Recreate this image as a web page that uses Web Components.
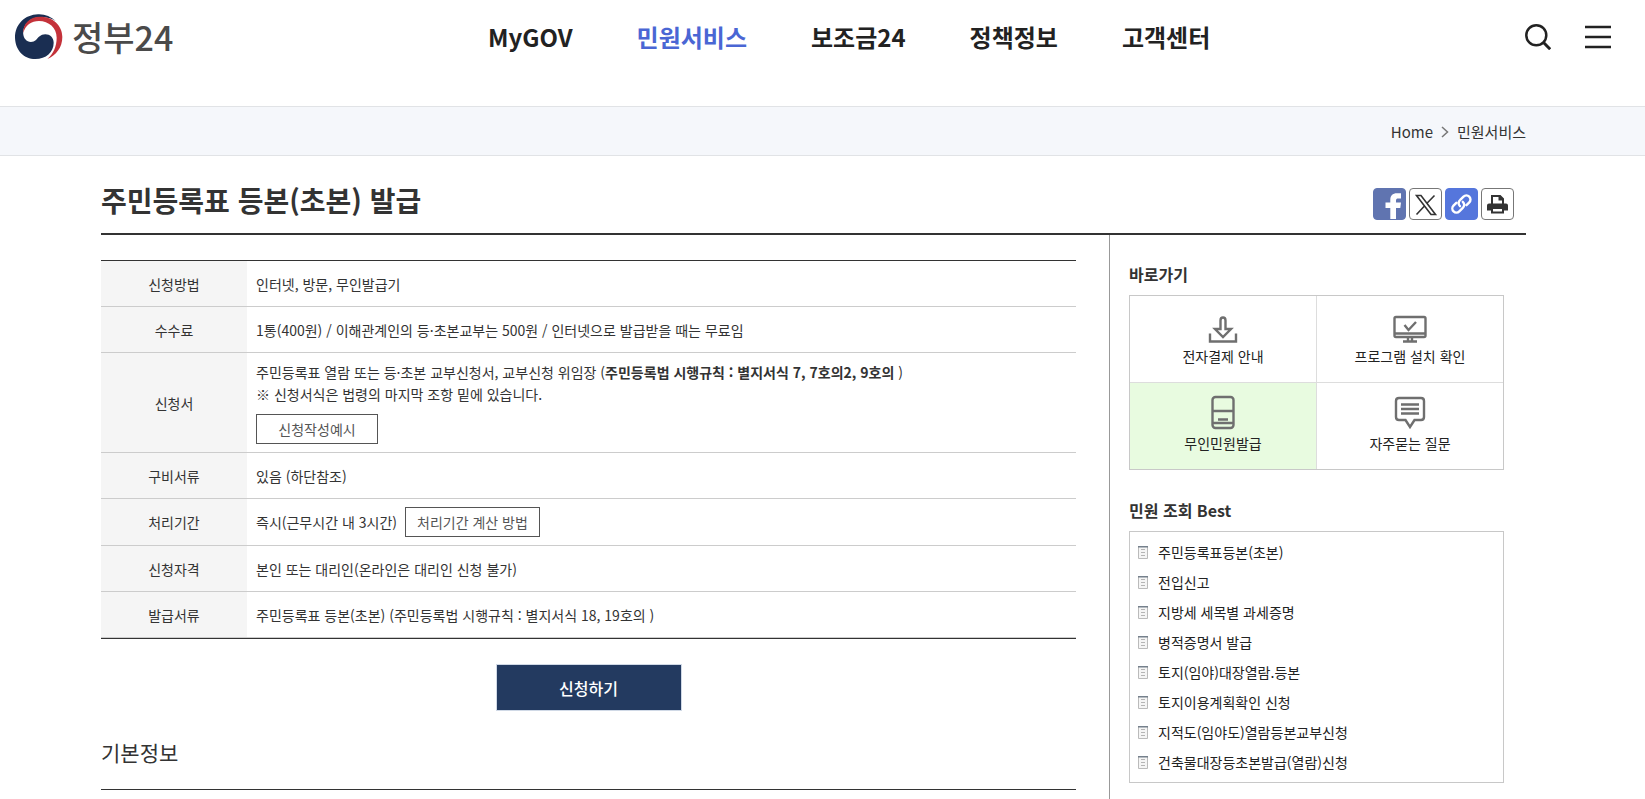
<!DOCTYPE html>
<html lang="ko">
<head>
<meta charset="utf-8">
<meta name="viewport" content="width=device-width, initial-scale=1">
<title>주민등록표 등본(초본) 발급 | 정부24</title>
<style>
  body {
    margin: 0;
    font-family: "Noto Sans CJK KR", sans-serif;
    font-size: 14px;
    line-height: 22px;
    color: #333;
    background: #fff;
  }
</style>
</head>
<body>
<gov-page>
  <gov-header slot="header"></gov-header>
  <gov-breadcrumb slot="header">
    <a slot="parent" href="#home">Home</a>
    <a href="#service">민원서비스</a>
  </gov-breadcrumb>

  <gov-title slot="title">
    주민등록표 등본(초본) 발급
    <gov-share slot="tools"></gov-share>
  </gov-title>

  <gov-info-table></gov-info-table>
  <gov-apply>신청하기</gov-apply>
  <gov-section-title>기본정보</gov-section-title>

  <gov-side-box slot="side" heading="바로가기">
    <gov-quick-links></gov-quick-links>
  </gov-side-box>
  <gov-side-box slot="side" heading="민원 조회 Best">
    <gov-best-list></gov-best-list>
  </gov-side-box>
</gov-page>

<script>
// shared helper: every component has an open root
function render(el, html) {
  el.attachShadow({ mode: "open" }).innerHTML = html;
}

class GovPage extends HTMLElement {
  constructor() {
    super();
    render(this, /* html */ `
      <style>
        :host {
          display: flex;
          flex-direction: column;
          min-height: 100vh;
        }
        .container {
          flex: 1;
          display: flex;
          flex-direction: column;
          padding: 0 119px 0 101px;
        }
        .columns {
          flex: 1;
          display: grid;
          grid-template-columns: minmax(0, 1fr) 417px;
          gap: 33px;
        }
        main { padding-top: 25px; }
        aside {
          box-sizing: border-box;
          display: flex;
          flex-direction: column;
          gap: 27px;
          border-left: 1px solid #999;
          padding: 26px 22px 0 19px;
        }
      </style>
      <slot name="header"></slot>
      <div class="container">
        <slot name="title"></slot>
        <div class="columns">
          <main><slot></slot></main>
          <aside><slot name="side"></slot></aside>
        </div>
      </div>
    `);
  }
}

class GovHeader extends HTMLElement {
  constructor() {
    super();
    render(this, /* html */ `
      <style>
        :host {
          display: flex;
          align-items: center;
          height: 74px;
          padding: 0 34px 32px 15px;
          border-bottom: 1px solid #e1e3e6;
        }
        a { color: inherit; text-decoration: none; }
        .logo {
          display: flex;
          align-items: center;
          gap: 9px;
          font-size: 34px;
          line-height: 46px;
          font-weight: 500;
          color: #4a4a4a;
        }
        nav {
          flex: 1;
          display: flex;
          justify-content: center;
          gap: 64px;
          font-size: 24px;
          line-height: 36px;
          font-weight: 700;
          color: #222;
        }
        nav a[aria-current] { color: #4a66d4; }
        .tools { display: flex; gap: 34px; }
        button {
          display: block;
          padding: 0;
          border: 0;
          background: none;
          cursor: pointer;
        }
        svg { display: block; }
      </style>
      <a class="logo" href="#main">
        <svg width="48" height="46" viewBox="45 41 144 138" aria-hidden="true">
          <path fill="#1a2e52" d="M168 63C152 48 134 41 114 42C75 43 45 72 45 112C46 150 72 176 106 176C138 176 161 155 161 127C161 112 150 102 136 102C121 102 115 112 108 119C99 127 84 127 76 117C69 108 69 96 70 92C73 68 94 52 119 51C140 50 156 54 168 63Z"/>
          <path fill="#c4323a" d="M70 98C68 70 90 49 119 49C157 48 187 74 187 110C187 142 168 165 142 176C160 160 170 138 170 112C170 82 146 62 117 62C94 62 76 74 70 98Z"/>
        </svg>
        <span>정부24</span>
      </a>
      <nav aria-label="주메뉴">
        <a href="#mygov">MyGOV</a>
        <a href="#service" aria-current="page">민원서비스</a>
        <a href="#subsidy">보조금24</a>
        <a href="#policy">정책정보</a>
        <a href="#help">고객센터</a>
      </nav>
      <div class="tools">
        <button type="button" aria-label="검색">
          <svg width="26" height="26" viewBox="0 0 26 26" fill="none" stroke="#222" stroke-width="2.5">
            <circle cx="11.3" cy="11.3" r="10"/><path d="M18.5 18.5L25.2 25.2" stroke-width="3"/>
          </svg>
        </button>
        <button type="button" aria-label="전체메뉴">
          <svg width="26" height="26" viewBox="0 0 26 26" stroke="#222" stroke-width="2.6">
            <path d="M0 3H26M0 13H26M0 23H26"/>
          </svg>
        </button>
      </div>
    `);
  }
}

class GovBreadcrumb extends HTMLElement {
  constructor() {
    super();
    render(this, /* html */ `
      <style>
        :host {
          display: block;
          padding: 13px 119px 11px;
          background: #f5f7fb;
          border-bottom: 1px solid #e1e3e6;
          font-size: 15px;
          line-height: 24px;
        }
        nav {
          display: flex;
          justify-content: flex-end;
          align-items: center;
          gap: 8px;
        }
        ::slotted(a) { color: #333; text-decoration: none; }
      </style>
      <nav aria-label="현재위치">
        <slot name="parent"></slot>
        <svg width="8" height="12" viewBox="0 0 8 12" aria-hidden="true">
          <path d="M1 1L6.500 6L1 11" fill="none" stroke="#777" stroke-width="1.500"/>
        </svg>
        <slot></slot>
      </nav>
    `);
  }
}

class GovTitle extends HTMLElement {
  constructor() {
    super();
    render(this, /* html */ `
      <style>
        :host {
          display: flex;
          align-items: flex-end;
          justify-content: space-between;
          padding: 24px 12px 13px 0;
          border-bottom: 2px solid #333;
        }
        h1 {
          margin: 0;
          font-size: 28px;
          line-height: 40px;
          font-weight: 700;
        }
      </style>
      <h1><slot></slot></h1>
      <slot name="tools"></slot>
    `);
  }
}

class GovShare extends HTMLElement {
  constructor() {
    super();
    render(this, /* html */ `
      <style>
        :host { display: flex; gap: 3px; }
        button {
          box-sizing: border-box;
          width: 33px;
          height: 32px;
          padding: 0;
          border: 1px solid #777;
          border-radius: 4px;
          background: #fff;
          overflow: hidden;
          cursor: pointer;
        }
        .fb { background: #6074b0; border-color: #6074b0; }
        .link { background: #5576dc; border-color: #5576dc; }
        svg { display: block; }
      </style>
      <button class="fb" type="button" aria-label="페이스북 공유">
        <svg width="31" height="30" viewBox="0 0 31 30"><path fill="#fff" d="M16.300 31V19H11.500V13.500H16.300V11C16.300 6.500 18.500 4.200 23 4.200H27V9.500H24.500C22.500 9.500 22 10 22 11.800V13.500H27L26.300 19H22V31Z"/></svg>
      </button>
      <button type="button" aria-label="X 공유">
        <svg width="31" height="30" viewBox="0 0 31 30" fill="none" stroke="#333"><path stroke-width="1.600" d="M6.500 6.500H11L25.500 25.500H21ZM24.500 6.500L17.200 14M14 17.500L6.500 25.500"/></svg>
      </button>
      <button class="link" type="button" aria-label="주소 복사">
        <svg width="31" height="30" viewBox="0 0 31 30" fill="none" stroke="#fff" stroke-width="2.400" stroke-linecap="round"><path d="M14 17.200A4 4 0 0 1 14 11.200L17.500 7.700A4 4 0 0 1 23.300 13.400L20.500 16.200M16.800 12.800A4 4 0 0 1 16.800 18.800L13.300 22.300A4 4 0 0 1 7.500 16.600L10.300 13.800"/></svg>
      </button>
      <button type="button" aria-label="인쇄">
        <svg width="31" height="30" viewBox="0 0 31 30"><path fill="#333" d="M7 14.500Q5 14.500 5 16.500V21.500H9V19.500H22V21.500H26V16.500Q26 14.500 24 14.500H22V9.500L18.500 6H9V14.500Z"/><path fill="#fff" d="M11 8H16.500V11.500H20V14.500H11Z"/><path fill="#fff" stroke="#333" stroke-width="2" d="M10 19H21V23.500H10Z"/></svg>
      </button>
    `);
  }
}

class GovInfoTable extends HTMLElement {
  constructor() {
    super();
    render(this, /* html */ `
      <style>
        :host { display: block; }
        table {
          width: 100%;
          border-collapse: separate;
          border-spacing: 0;
          border-top: 1px solid #333;
          border-bottom: 1px solid #333;
        }
        th, td {
          height: 29px;
          padding: 8px 9px;
          border-bottom: 1px solid #ccc;
          font-weight: 400;
        }
        th { width: 128px; background: #f5f5f5; text-align: center; }
        td { text-align: left; }
        p { margin: 0; }
        .line { display: flex; align-items: center; gap: 8px; }
        button {
          box-sizing: border-box;
          min-width: 122px;
          height: 30px;
          padding: 0 11px;
          border: 1px solid #555;
          background: #fff;
          color: #555;
          font: inherit;
          cursor: pointer;
        }
        p + button { display: block; margin-top: 9px; }
      </style>
      <table>
        <tbody>
          <tr><th scope="row">신청방법</th><td>인터넷, 방문, 무인발급기</td></tr>
          <tr><th scope="row">수수료</th><td>1통(400원) / 이해관계인의 등·초본교부는 500원 / 인터넷으로 발급받을 때는 무료임</td></tr>
          <tr>
            <th scope="row">신청서</th>
            <td>
              <p>주민등록표 열람 또는 등·초본 교부신청서, 교부신청 위임장 (<b>주민등록법 시행규칙 : 별지서식 7, 7호의2, 9호의</b> )</p>
              <p>※ 신청서식은 법령의 마지막 조항 밑에 있습니다.</p>
              <button type="button">신청작성예시</button>
            </td>
          </tr>
          <tr><th scope="row">구비서류</th><td>있음 (하단참조)</td></tr>
          <tr>
            <th scope="row">처리기간</th>
            <td><div class="line"><span>즉시(근무시간 내 3시간)</span><button type="button">처리기간 계산 방법</button></div></td>
          </tr>
          <tr><th scope="row">신청자격</th><td>본인 또는 대리인(온라인은 대리인 신청 불가)</td></tr>
          <tr><th scope="row">발급서류</th><td>주민등록표 등본(초본) (주민등록법 시행규칙 : 별지서식 18, 19호의 )</td></tr>
        </tbody>
      </table>
    `);
  }
}

class GovApply extends HTMLElement {
  constructor() {
    super();
    render(this, /* html */ `
      <style>
        :host { display: flex; justify-content: center; padding: 25px 0; }
        button {
          width: 186px;
          height: 47px;
          border: 1px solid #d0d9e6;
          background: #233a60;
          color: #fff;
          font: inherit;
          font-size: 16px;
          font-weight: 500;
          cursor: pointer;
        }
      </style>
      <button type="button"><slot></slot></button>
    `);
  }
}

class GovSectionTitle extends HTMLElement {
  constructor() {
    super();
    render(this, /* html */ `
      <style>
        :host { display: block; border-bottom: 1px solid #333; padding-bottom: 21px; }
        h2 { margin: 0; font-size: 21px; line-height: 32px; font-weight: 400; }
      </style>
      <h2><slot></slot></h2>
    `);
  }
}

class GovSideBox extends HTMLElement {
  constructor() {
    super();
    render(this, /* html */ `
      <style>
        :host { display: block; }
        h2 { margin: 0 0 8px; font-size: 16px; line-height: 26px; font-weight: 700; }
      </style>
      <h2></h2>
      <slot></slot>
    `);
  }

  connectedCallback() {
    this.shadowRoot.querySelector("h2").textContent = this.getAttribute("heading");
  }
}

class GovQuickLinks extends HTMLElement {
  constructor() {
    super();
    render(this, /* html */ `
      <style>
        :host {
          display: grid;
          grid-template-columns: 1fr 1fr;
          gap: 1px;
          border: 1px solid #c8c8c8;
          background: #ddd;
        }
        a {
          display: flex;
          flex-direction: column;
          align-items: center;
          box-sizing: border-box;
          height: 86px;
          padding-top: 11px;
          background: #fff;
          color: #222;
          text-decoration: none;
        }
        a.on { background: #e8fbe0; }
        svg { fill: none; stroke: #6f6f6f; stroke-width: 2.4; }
      </style>
      <a href="#pay">
        <svg width="36" height="38" viewBox="0 0 36 38"><path d="M5 26.500V34.500H31V26.500M15.500 22V13.500Q15.500 10.500 18 10.500T20.500 13.500V22H26L18 30L10 22Z"/></svg>
        전자결제 안내
      </a>
      <a href="#program">
        <svg width="36" height="38" viewBox="0 0 36 38"><rect x="2.500" y="10" width="31" height="20" rx="1.500"/><path d="M3 26.500H33M16 30V34M20 30V34M11 34.500H25M12.500 18L16.500 23L24 15"/></svg>
        프로그램 설치 확인
      </a>
      <a class="on" href="#kiosk">
        <svg width="36" height="38" viewBox="0 0 36 38"><rect x="7.500" y="3" width="21" height="31" rx="3"/><path d="M8 17H28M8 29H28M13 25.500H23"/></svg>
        무인민원발급
      </a>
      <a href="#faq">
        <svg width="36" height="38" viewBox="0 0 36 38"><path d="M7 4H29Q32 4 32 7V23Q32 26 29 26H22.500L18 33L13.500 26H7Q4 26 4 23V7Q4 4 7 4ZM9 10.500H27M9 15H27M9 19.500H27"/></svg>
        자주묻는 질문
      </a>
    `);
  }
}

class GovBestList extends HTMLElement {
  constructor() {
    super();
    const items = [
      "주민등록표등본(초본)",
      "전입신고",
      "지방세 세목별 과세증명",
      "병적증명서 발급",
      "토지(임야)대장열람.등본",
      "토지이용계획확인 신청",
      "지적도(임야도)열람등본교부신청",
      "건축물대장등초본발급(열람)신청",
    ];
    render(this, /* html */ `
      <style>
        :host { display: block; border: 1px solid #c8c8c8; padding: 5px 8px; }
        ul { margin: 0; padding: 0; list-style: none; }
        li { line-height: 30px; }
        a {
          display: flex;
          align-items: center;
          gap: 10px;
          color: #222;
          text-decoration: none;
        }
      </style>
      <ul>
        ${items.map((text) => `
          <li><a href="#best">
            <svg width="10" height="13" viewBox="0 0 10 13" aria-hidden="true">
              <path fill="#f5f5f5" stroke="#bbb" d="M.5 .5H9.500V12.500H.5Z"/>
              <path stroke="#75808c" stroke-width="1.500" d="M0 .75H10"/>
              <path stroke="#b5b5b5" d="M3 3.500H7M3 6.500H7M3 9.500H7"/>
            </svg>
            <span>${text}</span>
          </a></li>`).join("")}
      </ul>
    `);
  }
}

customElements.define("gov-page", GovPage);
customElements.define("gov-header", GovHeader);
customElements.define("gov-breadcrumb", GovBreadcrumb);
customElements.define("gov-title", GovTitle);
customElements.define("gov-share", GovShare);
customElements.define("gov-info-table", GovInfoTable);
customElements.define("gov-apply", GovApply);
customElements.define("gov-section-title", GovSectionTitle);
customElements.define("gov-side-box", GovSideBox);
customElements.define("gov-quick-links", GovQuickLinks);
customElements.define("gov-best-list", GovBestList);
</script>
</body>
</html>
